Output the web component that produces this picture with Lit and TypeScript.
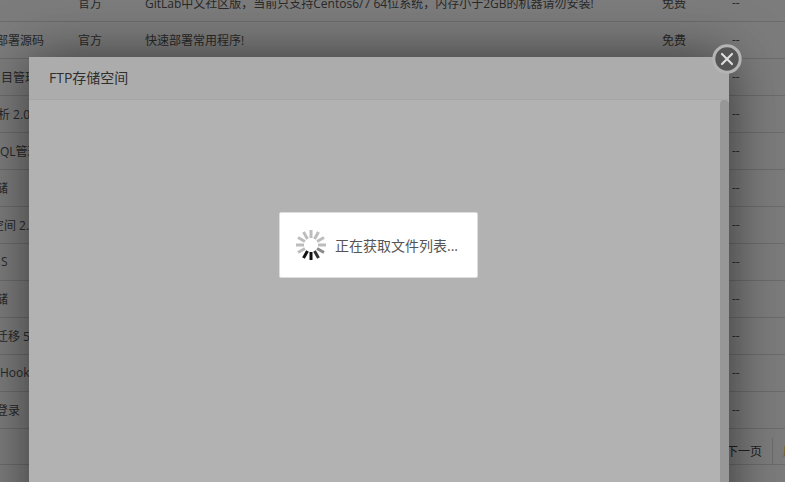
import { LitElement, html, css, svg } from "lit";
import { customElement } from "lit/decorators.js";

interface Row { name: string; indent: number; desc?: string }

const ROWS: Row[] = [
  { name: "", indent: 0, desc: "GitLab中文社区版，当前只支持Centos6/7 64位系统，内存小于2GB的机器请勿安装!" },
  { name: "部署源码", indent: 20, desc: "快速部署常用程序!" },
  { name: "目管理", indent: 25 },
  { name: "析 2.0", indent: 22 },
  { name: "QL管理", indent: 24 },
  { name: "储", indent: 20 },
  { name: "空间 2.x", indent: 16 },
  { name: "S", indent: 25 },
  { name: "储", indent: 20 },
  { name: "迁移 5.x", indent: 20 },
  { name: "Hook", indent: 24 },
  { name: "登录", indent: 20 },
];

const BLADES: [number, string][] = [
  [0, "#111"], [30, "#111"], [60, "#bdbdbd"], [90, "#bdbdbd"], [120, "#bdbdbd"], [150, "#bdbdbd"],
  [180, "#bdbdbd"], [210, "#bdbdbd"], [240, "#bdbdbd"], [270, "#bdbdbd"], [300, "#8a8a8a"], [330, "#333"],
];

@customElement("app-root")
export class AppRoot extends LitElement {
  static styles = css`
    :host {
      display: block;
      position: relative;
      width: 785px;
      height: 482px;
      overflow: hidden;
      background: #fff;
      font-family: "Open Sans", "Noto Sans CJK SC", sans-serif;
      font-size: 12px;
      color: #555;
    }
    .page {
      margin: -15px 0 0 -24px;
      width: 809px;
    }
    .row {
      display: grid;
      grid-template-columns: 102px 67px 517px 70px 1fr;
      align-items: center;
      height: 37px;
      box-sizing: border-box;
      padding-bottom: 1px;
      border-bottom: 1px solid #ddd;
      white-space: nowrap;
    }
    .row > div { overflow: hidden; }
    .pager {
      display: flex;
      justify-content: flex-end;
      margin-top: 9px;
      height: 27px;
      box-sizing: border-box;
      border-bottom: 1px solid #ddd;
      white-space: nowrap;
    }
    .pager span {
      display: flex;
      align-items: center;
      padding: 0 10px;
      border-right: 1px solid #ddd;
      color: #444;
    }
    .pager .total {
      border: none;
      box-sizing: border-box;
      width: 12px;
      padding: 0 0 0 10px;
      overflow: hidden;
      color: #f0b050;
    }
    .shade {
      position: absolute;
      inset: 0;
      background: rgba(0, 0, 0, 0.3);
    }
    .modal {
      position: absolute;
      left: 29px;
      top: 57px;
      width: 700px;
      height: 500px;
      background: #fff;
      box-shadow: 1px 1px 50px rgba(0, 0, 0, 0.55);
      display: flex;
      flex-direction: column;
    }
    .title {
      height: 43px;
      box-sizing: border-box;
      padding-left: 20px;
      line-height: 42px;
      font-size: 14px;
      color: #444;
      background: #f6f6f6;
      border-bottom: 1px solid #eee;
    }
    .body {
      flex: 1;
      display: flex;
      justify-content: flex-end;
    }
    .scrollbar {
      width: 9px;
      background: #d9d9d9;
      border-radius: 4px 4px 0 0;
    }
    .close {
      position: absolute;
      left: 712px;
      top: 44px;
      width: 30px;
      height: 30px;
      display: block;
    }
    .loading {
      position: absolute;
      left: 279px;
      top: 212px;
      width: 199px;
      height: 66px;
      box-sizing: border-box;
      background: #fff;
      border: 1px solid #ddd;
      border-radius: 2px;
      display: flex;
      align-items: center;
      gap: 8px;
      padding-left: 15px;
      font-size: 14px;
      color: #555;
      white-space: nowrap;
    }
    .spinner { width: 32px; height: 32px; flex: none; }
  `;

  render() {
    return html`
      <div class="page">
        ${ROWS.map(
          (r, i) => html`
            <div class="row">
              <div style="text-indent:${r.indent}px">${r.name}</div>
              <div>${i < 2 ? "官方" : ""}</div>
              <div>${r.desc ?? ""}</div>
              <div>${i < 2 ? "免费" : ""}</div>
              <div>--</div>
            </div>
          `
        )}
        <div class="pager">
          <span>下一页</span>
          <span class="total">尾页</span>
        </div>
      </div>
      <div class="shade"></div>
      <div class="modal">
        <div class="title">FTP存储空间</div>
        <div class="body"><div class="scrollbar"></div></div>
      </div>
      <div class="shade"></div>
      <svg class="close" viewBox="0 0 30 30">
        <circle cx="15" cy="15" r="13.2" fill="#555" stroke="#b4b4b4" stroke-width="3"></circle>
        <path d="M10 10 L20 20 M20 10 L10 20" stroke="#dcdcdc" stroke-width="2.2" stroke-linecap="round"></path>
      </svg>
      <div class="loading">
        <svg class="spinner" viewBox="-16 -16 32 32">
          ${BLADES.map(
            ([a, c]) => svg`<rect x="-1.5" y="7" width="3" height="8" fill=${c} transform="rotate(${a})"></rect>`
          )}
        </svg>
        <span>正在获取文件列表...</span>
      </div>
    `;
  }
}
